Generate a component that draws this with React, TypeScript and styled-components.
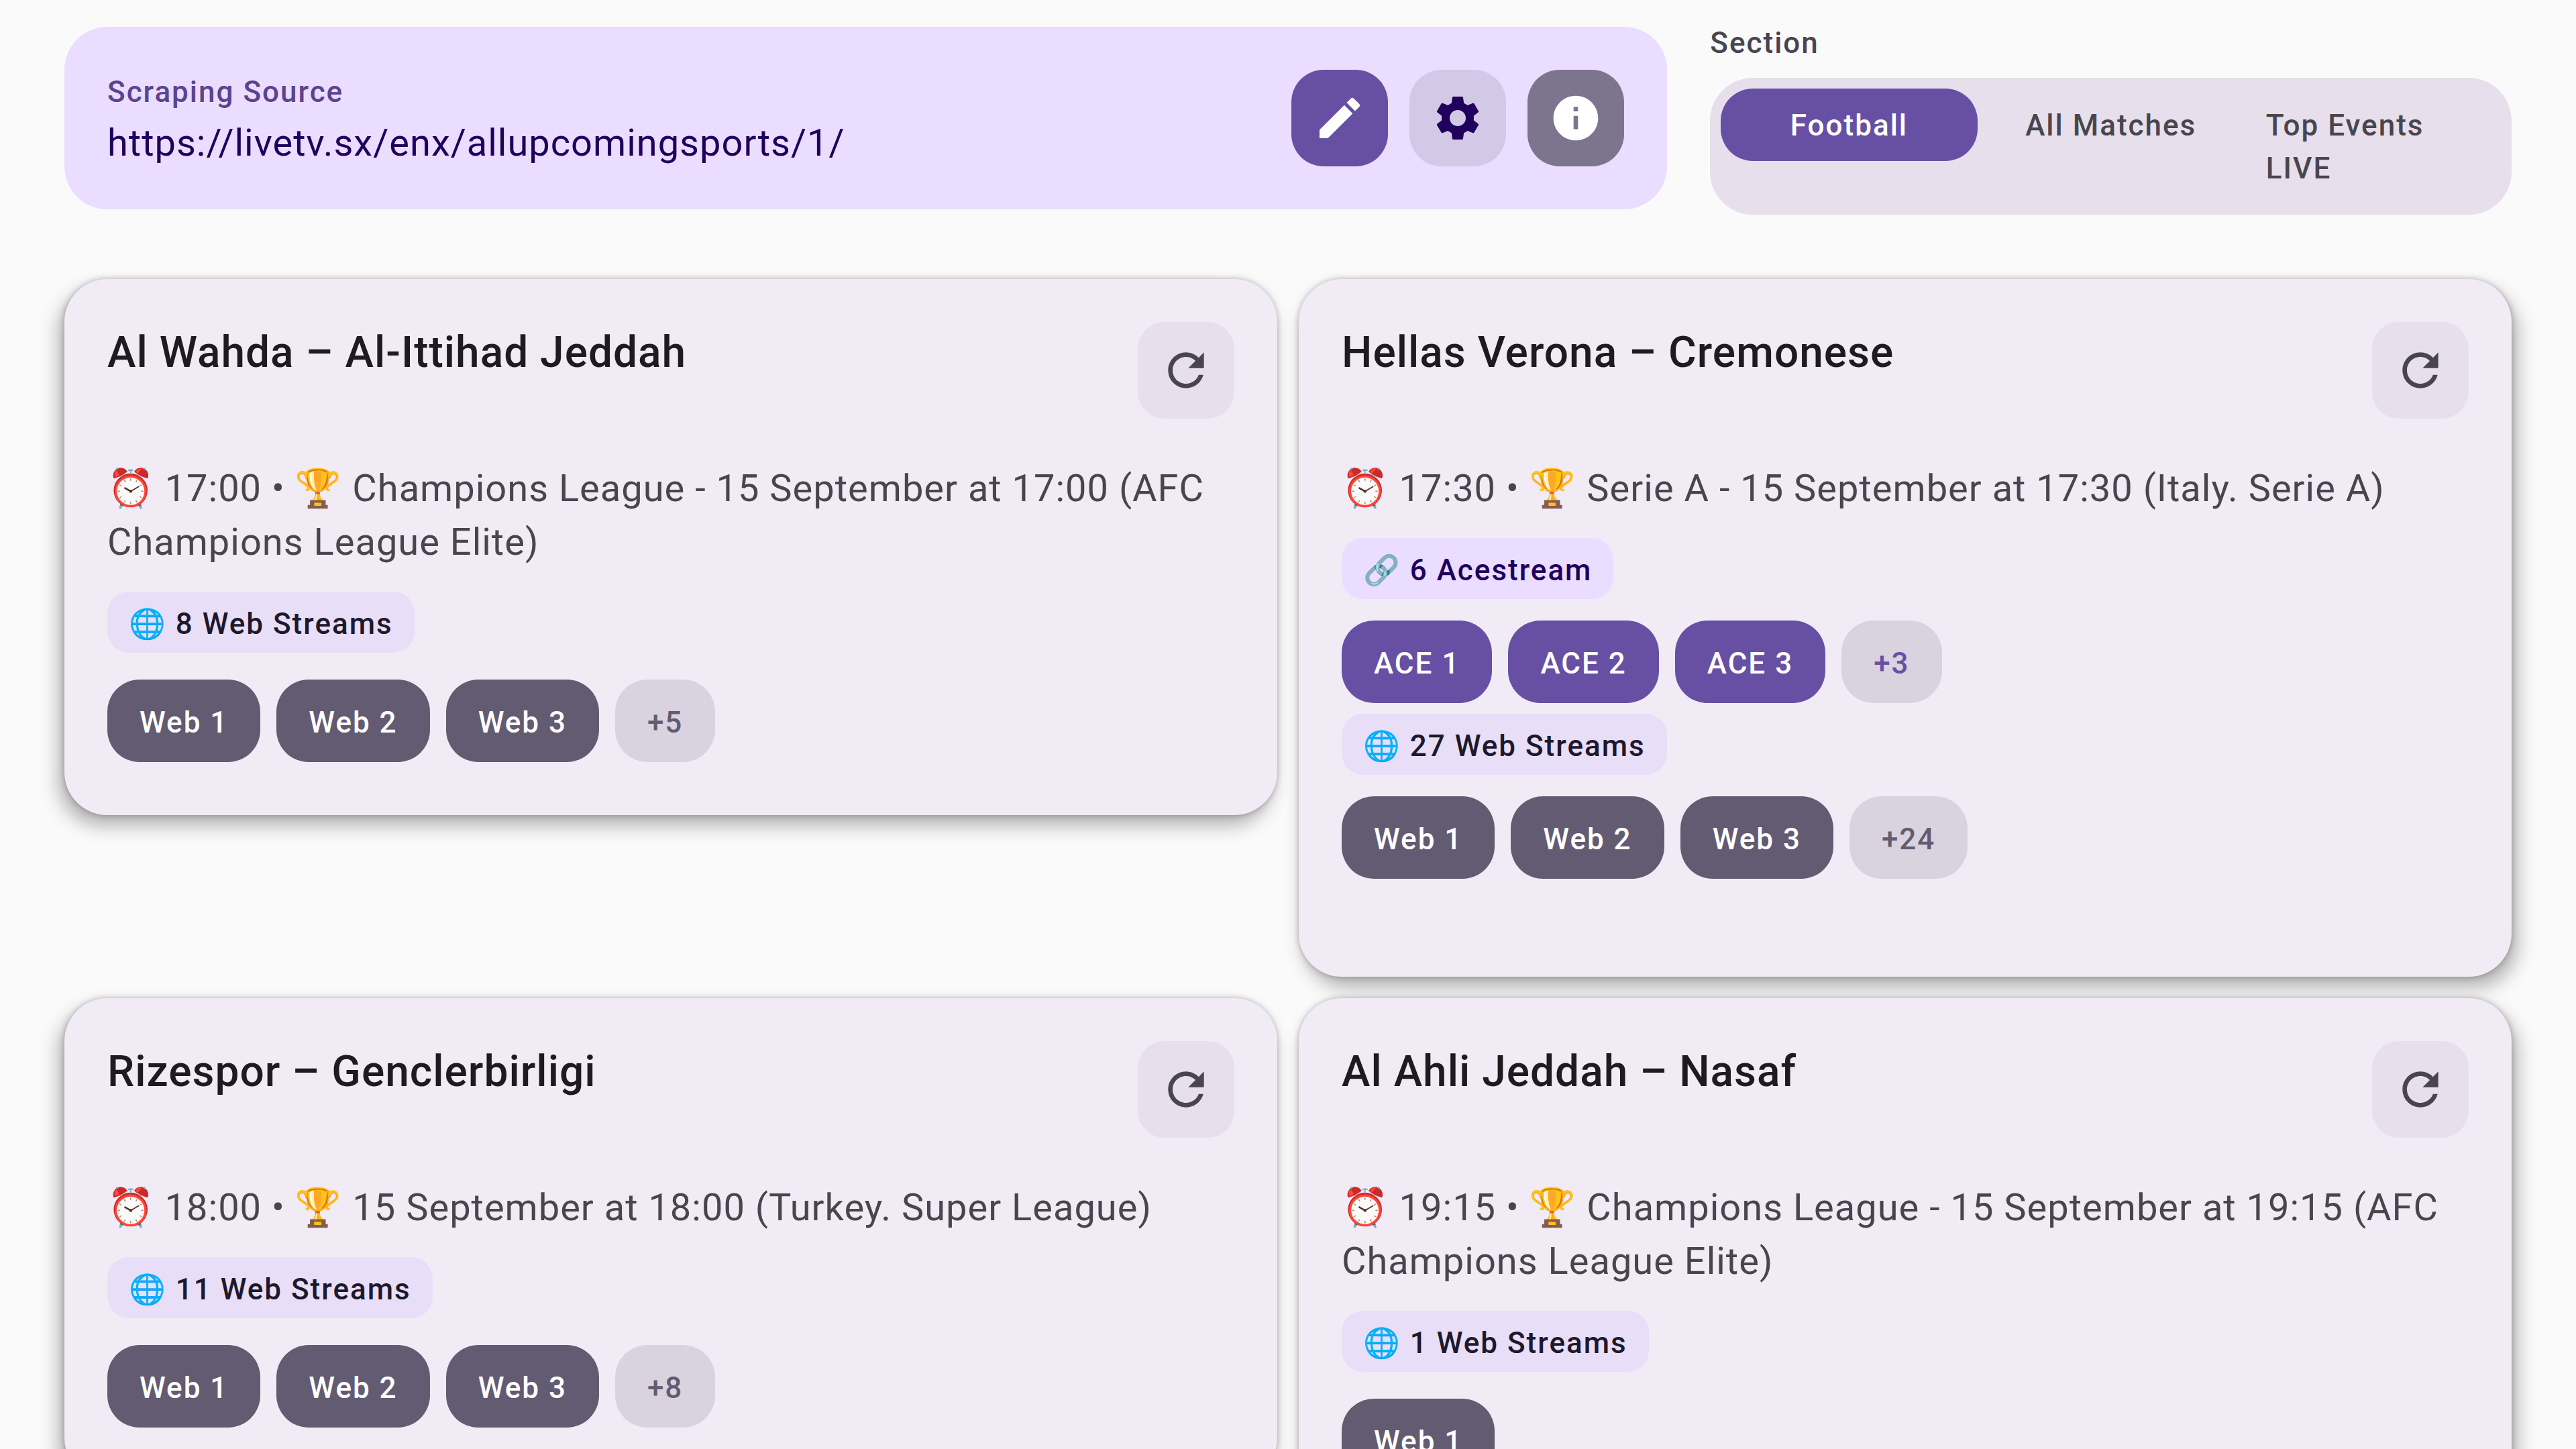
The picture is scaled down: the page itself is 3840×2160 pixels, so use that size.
import React, { useState } from "react";
import styled, { createGlobalStyle } from "styled-components";
import { MdEdit, MdInfo, MdRefresh, MdSettings } from "react-icons/md";

const GlobalStyle = createGlobalStyle`
  *, *::before, *::after { box-sizing: border-box; }
  body {
    margin: 0;
    background: #fafafa;
    font-family: Roboto, "Noto Color Emoji", sans-serif;
    color: #1d1b20;
  }
  h2, p { margin: 0; }
  button { border: 0; margin: 0; font-family: inherit; cursor: pointer; }
`;

const Screen = styled.div`
  height: 100vh;
  overflow-y: auto;
  scrollbar-width: none;
  padding: 32px 96px 64px;
`;

const Header = styled.header`
  display: grid;
  grid-template-columns: minmax(0, 2fr) minmax(0, 1fr);
  align-items: center;
  gap: 64px;
`;

const SourcePanel = styled.section`
  display: flex;
  align-items: center;
  gap: 32px;
  min-height: 272px;
  padding: 0 64px;
  border-radius: 64px;
  background: #eaddff;
`;

const SourceText = styled.div`
  flex: 1;
  min-width: 0;
  display: flex;
  flex-direction: column;
  gap: 4px;
  padding-top: 6px;
`;

const SourceLabel = styled.p`
  font-size: 44px;
  line-height: 64px;
  font-weight: 500;
  letter-spacing: 2px;
  color: #5d428e;
`;

const SourceUrl = styled.p`
  font-size: 56px;
  line-height: 80px;
  letter-spacing: 1px;
  color: #21005d;
`;

const IconButton = styled.button<{ $bg: string; $fg: string; $radius?: number }>`
  flex: none;
  display: flex;
  align-items: center;
  justify-content: center;
  width: 144px;
  height: 144px;
  padding: 0;
  border-radius: ${(p) => p.$radius ?? 48}px;
  background: ${(p) => p.$bg};
  color: ${(p) => p.$fg};
  font-size: 80px;
`;

const SectionPicker = styled.section`
  display: flex;
  flex-direction: column;
  gap: 20px;
`;

const SectionLabel = styled.p`
  font-size: 44px;
  line-height: 64px;
  font-weight: 500;
  letter-spacing: 2px;
  color: #49454f;
`;

const Tabs = styled.div`
  display: flex;
  align-items: flex-start;
  gap: 0 8px;
  padding: 16px;
  border-radius: 64px;
  background: #e7dfeb;
`;

const Tab = styled.button<{ $active: boolean }>`
  flex: 1 1 0;
  min-width: 0;
  display: flex;
  justify-content: center;
  padding: 23px 32px 21px;
  border-radius: 48px;
  background: ${(p) => (p.$active ? "#6750a4" : "transparent")};
  color: ${(p) => (p.$active ? "#ffffff" : "#49454f")};
  font-size: 44px;
  line-height: 64px;
  font-weight: 500;
  letter-spacing: 2px;
  text-align: left;
`;

const Matches = styled.main`
  display: grid;
  grid-template-columns: repeat(2, minmax(0, 1fr));
  align-items: start;
  gap: 32px;
  margin-top: 96px;
`;

const Card = styled.article<{ $tall: boolean }>`
  padding: 64px 64px ${(p) => (p.$tall ? 146 : 79)}px;
  border-radius: 64px;
  background: #f1ebf6;
  box-shadow:
    0 0 8px rgba(0, 0, 0, 0.26),
    -8px 15px 28px rgba(0, 0, 0, 0.3);

  &:nth-child(even) {
    box-shadow:
      0 0 8px rgba(0, 0, 0, 0.26),
      8px 15px 28px rgba(0, 0, 0, 0.3);
  }
`;

const CardHead = styled.div`
  display: flex;
  align-items: flex-start;
  justify-content: space-between;
  gap: 32px;
`;

const Title = styled.h2`
  font-size: 64px;
  line-height: 92px;
  font-weight: 500;
  letter-spacing: 1px;
  color: #1d1b20;
`;

const Meta = styled.p`
  margin-top: 64px;
  font-size: 56px;
  line-height: 80px;
  letter-spacing: 1px;
  color: #49454f;
`;

const Streams = styled.div`
  display: flex;
  flex-direction: column;
  gap: 16px;
  margin-top: 34px;
`;

const StreamGroup = styled.section<{ $gap: number }>`
  display: flex;
  flex-direction: column;
  align-items: flex-start;
  gap: ${(p) => p.$gap}px;
`;

const Badge = styled.span<{ $ace: boolean }>`
  display: flex;
  align-items: center;
  height: 91px;
  padding: 4px 32px 0;
  border-radius: 32px;
  background: ${(p) => (p.$ace ? "#eaddff" : "#e8def8")};
  color: ${(p) => (p.$ace ? "#21005d" : "#1d192b")};
  font-size: 44px;
  line-height: 64px;
  font-weight: 500;
  letter-spacing: 2px;
`;

const Chips = styled.div`
  display: flex;
  flex-wrap: wrap;
  gap: 24px;
`;

const Chip = styled.button<{ $bg: string; $fg: string }>`
  height: 123px;
  padding: 4px 48px 0;
  border-radius: 48px;
  background: ${(p) => p.$bg};
  color: ${(p) => p.$fg};
  font-size: 44px;
  line-height: 64px;
  font-weight: 500;
  letter-spacing: 2px;
`;

type Match = {
  title: string;
  time: string;
  info: string;
  ace: number;
  web: number;
};

const matches: Match[] = [
  {
    title: "Al Wahda – Al-Ittihad Jeddah",
    time: "17:00",
    info: "Champions League - 15 September at 17:00 (AFC Champions League Elite)",
    ace: 0,
    web: 8,
  },
  {
    title: "Hellas Verona – Cremonese",
    time: "17:30",
    info: "Serie A - 15 September at 17:30 (Italy. Serie A)",
    ace: 6,
    web: 27,
  },
  {
    title: "Rizespor – Genclerbirligi",
    time: "18:00",
    info: "15 September at 18:00 (Turkey. Super League)",
    ace: 0,
    web: 11,
  },
  {
    title: "Al Ahli Jeddah – Nasaf",
    time: "19:15",
    info: "Champions League - 15 September at 19:15 (AFC Champions League Elite)",
    ace: 0,
    web: 1,
  },
];

const sections = ["Football", "All Matches", "Top Events LIVE"];
const VISIBLE = 3;

function StreamList({ kind, count, gap }: { kind: "ace" | "web"; count: number; gap: number }) {
  const ace = kind === "ace";
  const color = ace ? "#6750a4" : "#625b71";
  const shown = Array.from({ length: Math.min(count, VISIBLE) }, (_, i) => i + 1);
  return (
    <StreamGroup $gap={gap}>
      <Badge $ace={ace}>{ace ? `🔗 ${count} Acestream` : `🌐 ${count} Web Streams`}</Badge>
      <Chips>
        {shown.map((n) => (
          <Chip key={n} type="button" $bg={color} $fg="#ffffff">
            {`${ace ? "ACE" : "Web"} ${n}`}
          </Chip>
        ))}
        {count > VISIBLE && (
          <Chip type="button" $bg="#d9d3df" $fg={color}>
            {`+${count - VISIBLE}`}
          </Chip>
        )}
      </Chips>
    </StreamGroup>
  );
}

function MatchCard({ match }: { match: Match }) {
  const both = match.ace > 0 && match.web > 0;
  const gap = both ? 32 : 40;
  return (
    <Card $tall={both}>
      <CardHead>
        <Title>{match.title}</Title>
        <IconButton type="button" aria-label="Refresh" $bg="#e7dfeb" $fg="#49454f" $radius={40}>
          <MdRefresh />
        </IconButton>
      </CardHead>
      <Meta>{`⏰ ${match.time} • 🏆 ${match.info}`}</Meta>
      <Streams>
        {match.ace > 0 && <StreamList kind="ace" count={match.ace} gap={gap} />}
        {match.web > 0 && <StreamList kind="web" count={match.web} gap={gap} />}
      </Streams>
    </Card>
  );
}

export default function App() {
  const [section, setSection] = useState(sections[0]);
  return (
    <Screen>
      <GlobalStyle />
      <Header>
        <SourcePanel>
          <SourceText>
            <SourceLabel>Scraping Source</SourceLabel>
            <SourceUrl>https://livetv.sx/enx/allupcomingsports/1/</SourceUrl>
          </SourceText>
          <IconButton type="button" aria-label="Edit source" $bg="#6750a4" $fg="#ffffff">
            <MdEdit />
          </IconButton>
          <IconButton type="button" aria-label="Settings" $bg="#d3c9e7" $fg="#21005d">
            <MdSettings />
          </IconButton>
          <IconButton type="button" aria-label="About" $bg="#7d758d" $fg="#ffffff">
            <MdInfo />
          </IconButton>
        </SourcePanel>
        <SectionPicker>
          <SectionLabel>Section</SectionLabel>
          <Tabs>
            {sections.map((name) => (
              <Tab
                key={name}
                type="button"
                aria-pressed={name === section}
                $active={name === section}
                onClick={() => setSection(name)}
              >
                <span>{name}</span>
              </Tab>
            ))}
          </Tabs>
        </SectionPicker>
      </Header>
      <Matches>
        {matches.map((m) => (
          <MatchCard key={m.title} match={m} />
        ))}
      </Matches>
    </Screen>
  );
}
